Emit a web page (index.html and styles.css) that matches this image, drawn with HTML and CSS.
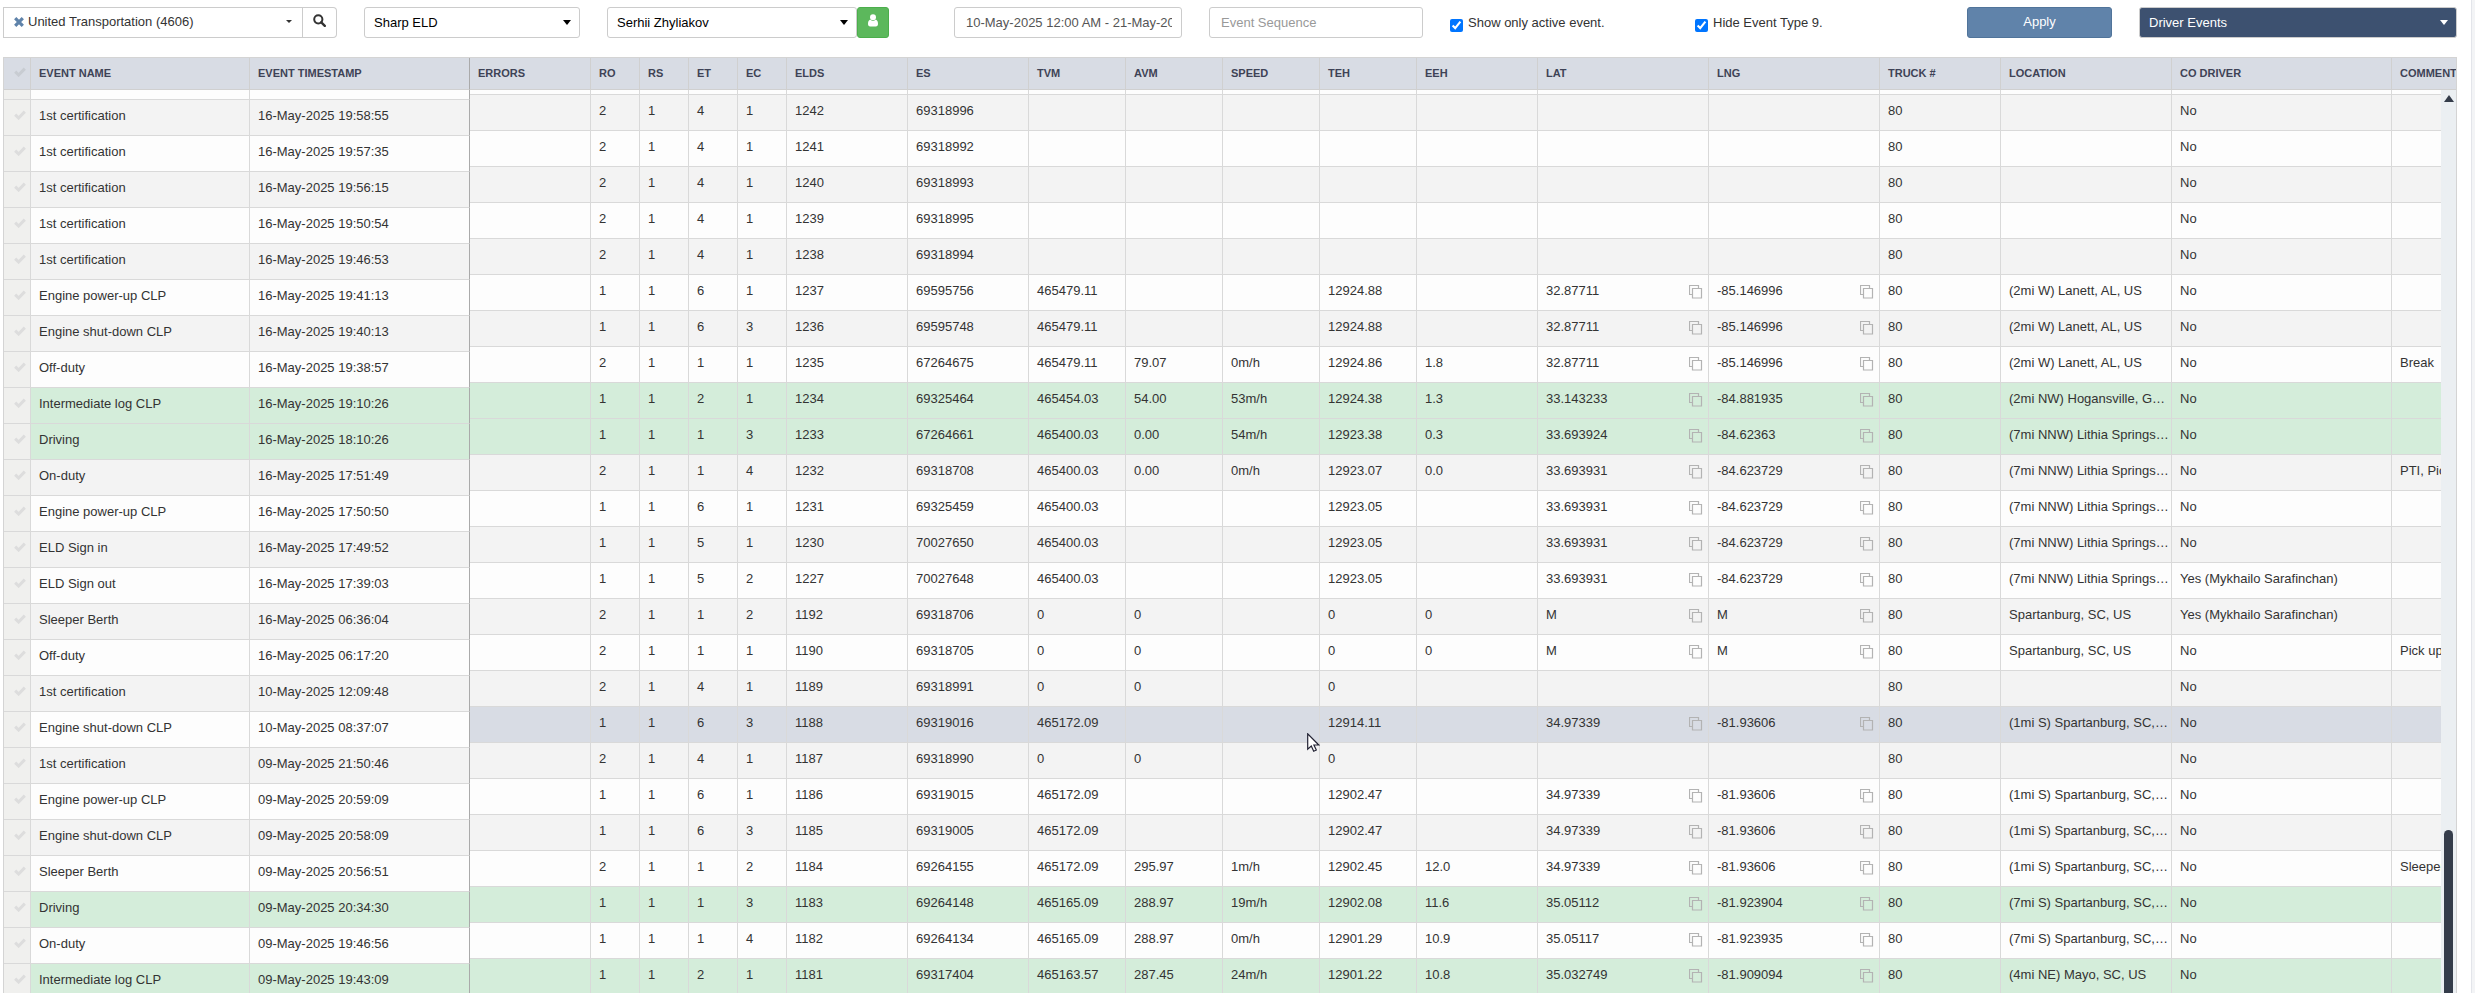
FILE: index.html
```html
<!DOCTYPE html>
<html lang="en">
<head>
    <meta charset="UTF-8">
    <meta name="viewport" content="width=device-width, initial-scale=1.0">
    <title>Driver Events</title>
    <link rel="stylesheet" href="styles.css">
</head>
<body>
    <svg class="sprite" aria-hidden="true">
        <symbol id="check" viewBox="0 0 12 10"><path d="M1.2 4.6 4.6 8 10.8 1.6" fill="none" stroke="currentColor" stroke-width="3"/></symbol>
        <symbol id="copy" viewBox="0 0 14 14"><path d="M3.5 9.5H.5V.5h9v3M3.5 3.5h9v9.500h-9z" fill="none" stroke="currentColor" stroke-width="1.2"/></symbol>
    </svg>

    <main class="panel">
        <form class="toolbar">
            <div class="company">
                <button type="button" class="company-select">
                    <svg class="icon-clear" viewBox="0 0 10 10"><path d="M1.200 1.200 8.800 8.800M8.800 1.200 1.200 8.800" stroke="currentColor" stroke-width="3.200"/></svg>
                    <span class="company-name">United Transportation (4606)</span>
                    <span class="caret-small"></span>
                </button>
                <button type="button" class="search" aria-label="Search">
                    <svg viewBox="0 0 13 13"><circle cx="5.300" cy="5.300" r="4.100" fill="none" stroke="currentColor" stroke-width="2"/><path d="M8.300 8.300 11.800 11.800" stroke="currentColor" stroke-width="2.400" stroke-linecap="round"/></svg>
                </button>
            </div>

            <div class="select-wrap">
                <select class="control" aria-label="Provider"><option>Sharp ELD</option></select>
            </div>

            <div class="driver">
                <div class="select-wrap">
                    <select class="control" aria-label="Driver"><option>Serhii Zhyliakov</option></select>
                </div>
                <button type="button" class="driver-button" aria-label="Driver profile">
                    <svg viewBox="0 0 10 13"><circle cx="5" cy="3.200" r="3" fill="currentColor"/><path d="M2.200 5.600C.8 6.200 0 7.800 0 9.800 0 11.600.8 12.500 2.200 12.500h5.600c1.400 0 2.200-.9 2.200-2.700 0-2-.8-3.600-2.200-4.200C7 6.500 6 6.900 5 6.900s-2-.4-2.800-1.300z" fill="currentColor"/></svg>
                </button>
            </div>

            <input class="control text" type="text" aria-label="Date range" value="10-May-2025 12:00 AM - 21-May-2025 11:59 PM">
            <input class="control text" type="text" aria-label="Event Sequence" placeholder="Event Sequence">

            <label class="check-label"><input type="checkbox" checked> Show only active event.</label>
            <label class="check-label"><input type="checkbox" checked> Hide Event Type 9.</label>

            <button type="button" class="apply">Apply</button>

            <div class="select-wrap dark">
                <select class="control" aria-label="Report"><option>Driver Events</option></select>
            </div>
        </form>

        <div class="grid">
            <table class="events pinned">
                <colgroup>
                    <col class="w-check"><col class="w-name"><col class="w-time">
                </colgroup>
                <thead>
                    <tr>
                        <th class="row-check"><svg class="icon-check"><use href="#check"/></svg></th>
                        <th>EVENT NAME</th>
                        <th>EVENT TIMESTAMP</th>
                    </tr>
                </thead>
                <tbody id="pinnedRows"></tbody>
            </table>

            <div class="scroll-pane">
                <table class="events details">
                    <colgroup>
                        <col class="w-wide"><col class="w-code"><col class="w-code"><col class="w-code"><col class="w-code">
                        <col class="w-wide"><col class="w-wide">
                        <col class="w-num"><col class="w-num"><col class="w-num"><col class="w-num">
                        <col class="w-wide"><col class="w-coord"><col class="w-coord"><col class="w-wide"><col class="w-coord">
                        <col class="w-time"><col class="w-time">
                    </colgroup>
                    <thead>
                        <tr>
                            <th>ERRORS</th><th>RO</th><th>RS</th><th>ET</th><th>EC</th><th>ELDS</th><th>ES</th>
                            <th>TVM</th><th>AVM</th><th>SPEED</th><th>TEH</th><th>EEH</th><th>LAT</th><th>LNG</th>
                            <th>TRUCK #</th><th>LOCATION</th><th>CO DRIVER</th><th>COMMENTS</th>
                        </tr>
                    </thead>
                    <tbody id="detailRows"></tbody>
                </table>
            </div>

            <div class="scrollbar">
                <span class="scroll-up"></span>
                <span class="scroll-thumb"></span>
            </div>
        </div>
    </main>

    <svg class="pointer" viewBox="0 0 13 19"><path d="M.7.8v15.400l3.600-3.200 2.400 5.200 2.600-1.200-2.400-5h4.900z" fill="#fff" stroke="#223" stroke-width="1.200"/></svg>

    <script src="script.js"></script>
</body>
</html>
```
FILE: styles.css
```css
* {
    box-sizing: border-box;
}

body {
    margin: 0;
    background: #f3f4f6;
    color: #333;
    font: 13px/20px "Liberation Sans", Arial, sans-serif;
}

.sprite {
    display: none;
}

.panel {
    display: flex;
    flex-direction: column;
    height: 100vh;
    margin-right: 3px;
    padding: 7px 14px 0 3px;
    border-right: 1px solid #e3e5ea;
    background: #fff;
    overflow: hidden;
}

/* Toolbar */
.toolbar {
    display: grid;
    grid-template-columns: 334fr 216fr 320fr 228fr 214fr 218fr 245fr 145fr 318fr;
    gap: 27px;
    margin-bottom: 19px;
}

button,
select,
input {
    font: inherit;
}

.control {
    display: block;
    width: 100%;
    min-width: 0;
    height: 31px;
    padding: 0 9px;
    border: 1px solid #ccc;
    border-radius: 3px;
    background: #fff;
    color: #000;
    appearance: none;
}

.text {
    padding: 0 9px 0 11px;
    color: #555;
}

.text::placeholder {
    color: #999;
}

.select-wrap {
    position: relative;
    flex: 1;
    min-width: 0;
}

.select-wrap::after {
    content: "";
    position: absolute;
    top: 13px;
    right: 9px;
    border: 4px solid transparent;
    border-top: 5px solid #000;
    border-bottom: 0;
    pointer-events: none;
}

.dark .control {
    background: #3d5170;
    color: #fff;
}

.dark::after {
    border-top-color: #fff;
}

.company,
.driver {
    display: flex;
}

.driver {
    padding-right: 38px;
}

.company-select {
    display: flex;
    flex: 1;
    align-items: center;
    padding: 0 10px 2px;
    border: 1px solid #ccc;
    background: #fff;
    color: #333;
    text-align: left;
}

.company-name {
    flex: 1;
    margin-left: 4px;
}

.icon-clear {
    width: 10px;
    height: 10px;
    color: #5f83aa;
}

.caret-small {
    border: 3px solid transparent;
    border-top-color: #333;
    border-bottom: 0;
}

.search {
    width: 34px;
    padding: 0;
    border: 1px solid #ccc;
    border-left: 0;
    border-radius: 0 4px 4px 0;
    background: #fff;
    color: #333;
}

.search svg {
    width: 13px;
    height: 13px;
}

.driver-button {
    width: 32px;
    padding: 0;
    border: 1px solid #4cae4c;
    border-radius: 3px;
    background: #5cb85c;
    color: #fff;
}

.driver-button svg {
    width: 10px;
    height: 13px;
}

.check-label {
    display: flex;
    align-items: center;
    gap: 5px;
    height: 32px;
    margin-bottom: -1px;
}

.check-label input {
    width: 13px;
    height: 13px;
    margin: 4px 0 0;
}

.apply {
    height: 31px;
    padding: 0 0 2px;
    border: 1px solid #50749a;
    border-radius: 3px;
    background: #6083aa;
    color: #fff;
}

/* Events grid */
.grid {
    position: relative;
    display: flex;
    flex: 1;
    min-height: 0;
    align-items: flex-start;
    border: 1px solid #d4d4d4;
    border-bottom: 0;
    overflow: hidden;
}

.scroll-pane {
    flex: 1;
    min-width: 0;
    overflow: hidden;
}

.events {
    table-layout: fixed;
    border-collapse: separate;
    border-spacing: 0;
}

.pinned {
    flex: none;
    width: 466px;
}

.details {
    width: 2110px;
}

.w-check { width: 27px; }
.w-name { width: 219px; }
.w-time { width: 220px; }
.w-code { width: 49px; }
.w-num { width: 97px; }
.w-wide { width: 121px; }
.w-coord { width: 171px; }

th,
td {
    padding: 0 2px 0 8px;
    border-right: 1px solid #d9d9d9;
    border-bottom: 1px solid #d9d9d9;
    text-align: left;
    vertical-align: top;
    white-space: nowrap;
    overflow: hidden;
    text-overflow: ellipsis;
}

th {
    height: 32px;
    border-color: #d0d0d0;
    background: #d8dce4;
    color: #3e4356;
    font-size: 11px;
    line-height: 31px;
    text-overflow: clip;
}

td {
    height: 36px;
    padding-top: 6px;
    background: #fdfdfd;
}

.odd td {
    background: #f3f3f3;
}

.driving td {
    background: #d4edda;
}

.hover td {
    background: #d8dce4;
}

.pinned th:last-child,
.pinned td:last-child {
    border-right-color: #aaa;
}

.events .row-check {
    padding-left: 10px;
    color: #ddd;
}

.events th.row-check {
    color: #c8ccd2;
}

.pinned td.row-check {
    background: #f0f0ee;
}

.icon-check {
    width: 12px;
    height: 10px;
}

/* Row scrolled halfway under the header */
.events .partial td {
    height: 10px;
    padding: 0;
}

.details .partial td {
    height: 5px;
}

.copy {
    float: right;
    display: block;
    width: 14px;
    height: 14px;
    margin: 4px 3px 0 0;
    padding: 0;
    border: 0;
    background: none;
    color: #b3b3b3;
}

.copy svg {
    display: block;
    width: 14px;
    height: 14px;
}

.scrollbar {
    position: absolute;
    top: 32px;
    right: 0;
    bottom: 0;
    width: 15px;
    background: #ebeff2;
}

.scroll-up {
    position: absolute;
    top: 5px;
    left: 3px;
    border: 5px solid transparent;
    border-top: 0;
    border-bottom: 7px solid #343c4a;
}

.scroll-thumb {
    position: absolute;
    top: 82%;
    bottom: 0;
    left: 3px;
    width: 9px;
    border-radius: 5px 5px 0 0;
    background: #343c4a;
}

.pointer {
    position: absolute;
    top: 733px;
    left: 1307px;
    width: 13px;
    height: 19px;
}
```
FILE: script.js
```js
// name | timestamp | RO | RS | ET | EC | ELDS | ES | TVM | AVM | SPEED | TEH | EEH | LAT | LNG | TRUCK | LOCATION | CO DRIVER | COMMENTS
const events = `
1st certification|16-May-2025 19:58:55|2|1|4|1|1242|69318996||||||||80||No|
1st certification|16-May-2025 19:57:35|2|1|4|1|1241|69318992||||||||80||No|
1st certification|16-May-2025 19:56:15|2|1|4|1|1240|69318993||||||||80||No|
1st certification|16-May-2025 19:50:54|2|1|4|1|1239|69318995||||||||80||No|
1st certification|16-May-2025 19:46:53|2|1|4|1|1238|69318994||||||||80||No|
Engine power-up CLP|16-May-2025 19:41:13|1|1|6|1|1237|69595756|465479.11|||12924.88||32.87711|-85.146996|80|(2mi W) Lanett, AL, US|No|
Engine shut-down CLP|16-May-2025 19:40:13|1|1|6|3|1236|69595748|465479.11|||12924.88||32.87711|-85.146996|80|(2mi W) Lanett, AL, US|No|
Off-duty|16-May-2025 19:38:57|2|1|1|1|1235|67264675|465479.11|79.07|0m/h|12924.86|1.8|32.87711|-85.146996|80|(2mi W) Lanett, AL, US|No|Break
Intermediate log CLP|16-May-2025 19:10:26|1|1|2|1|1234|69325464|465454.03|54.00|53m/h|12924.38|1.3|33.143233|-84.881935|80|(2mi NW) Hogansville, GA, US|No|
Driving|16-May-2025 18:10:26|1|1|1|3|1233|67264661|465400.03|0.00|54m/h|12923.38|0.3|33.693924|-84.62363|80|(7mi NNW) Lithia Springs, GA, US|No|
On-duty|16-May-2025 17:51:49|2|1|1|4|1232|69318708|465400.03|0.00|0m/h|12923.07|0.0|33.693931|-84.623729|80|(7mi NNW) Lithia Springs, GA, US|No|PTI, Pick up
Engine power-up CLP|16-May-2025 17:50:50|1|1|6|1|1231|69325459|465400.03|||12923.05||33.693931|-84.623729|80|(7mi NNW) Lithia Springs, GA, US|No|
ELD Sign in|16-May-2025 17:49:52|1|1|5|1|1230|70027650|465400.03|||12923.05||33.693931|-84.623729|80|(7mi NNW) Lithia Springs, GA, US|No|
ELD Sign out|16-May-2025 17:39:03|1|1|5|2|1227|70027648|465400.03|||12923.05||33.693931|-84.623729|80|(7mi NNW) Lithia Springs, GA, US|Yes (Mykhailo Sarafinchan)|
Sleeper Berth|16-May-2025 06:36:04|2|1|1|2|1192|69318706|0|0||0|0|M|M|80|Spartanburg, SC, US|Yes (Mykhailo Sarafinchan)|
Off-duty|16-May-2025 06:17:20|2|1|1|1|1190|69318705|0|0||0|0|M|M|80|Spartanburg, SC, US|No|Pick up
1st certification|10-May-2025 12:09:48|2|1|4|1|1189|69318991|0|0||0||||80||No|
Engine shut-down CLP|10-May-2025 08:37:07|1|1|6|3|1188|69319016|465172.09|||12914.11||34.97339|-81.93606|80|(1mi S) Spartanburg, SC, US|No|
1st certification|09-May-2025 21:50:46|2|1|4|1|1187|69318990|0|0||0||||80||No|
Engine power-up CLP|09-May-2025 20:59:09|1|1|6|1|1186|69319015|465172.09|||12902.47||34.97339|-81.93606|80|(1mi S) Spartanburg, SC, US|No|
Engine shut-down CLP|09-May-2025 20:58:09|1|1|6|3|1185|69319005|465172.09|||12902.47||34.97339|-81.93606|80|(1mi S) Spartanburg, SC, US|No|
Sleeper Berth|09-May-2025 20:56:51|2|1|1|2|1184|69264155|465172.09|295.97|1m/h|12902.45|12.0|34.97339|-81.93606|80|(1mi S) Spartanburg, SC, US|No|Sleeper Berth
Driving|09-May-2025 20:34:30|1|1|1|3|1183|69264148|465165.09|288.97|19m/h|12902.08|11.6|35.05112|-81.923904|80|(7mi S) Spartanburg, SC, US|No|
On-duty|09-May-2025 19:46:56|1|1|1|4|1182|69264134|465165.09|288.97|0m/h|12901.29|10.9|35.05117|-81.923935|80|(7mi S) Spartanburg, SC, US|No|
Intermediate log CLP|09-May-2025 19:43:09|1|1|2|1|1181|69317404|465163.57|287.45|24m/h|12901.22|10.8|35.032749|-81.909094|80|(4mi NE) Mayo, SC, US|No|
`.trim().split('\n').map(line => line.split('|'));

const checkCell = '<td class="row-check"><svg class="icon-check"><use href="#check"/></svg></td>';
const copyButton = '<button type="button" class="copy" aria-label="Copy"><svg><use href="#copy"/></svg></button>';
const hovered = '1188';

let pinned = '<tr class="partial"><td class="row-check"></td><td></td><td></td></tr>';
let details = '<tr class="partial">' + '<td></td>'.repeat(18) + '</tr>';

events.forEach((event, i) => {
    const [name, time, ...rest] = event;
    let rowClass = i % 2 === 0 ? 'odd' : '';
    if (name === 'Driving' || name.startsWith('Intermediate')) {
        rowClass = 'driving';
    }
    pinned += `<tr class="${rowClass}">${checkCell}<td>${name}</td><td>${time}</td></tr>`;

    if (rest[4] === hovered) {
        rowClass = 'hover';
    }
    const cells = rest.map((value, col) => {
        const isCoord = (col === 11 || col === 12) && value;
        return `<td>${isCoord ? copyButton : ''}${value}</td>`;
    });
    details += `<tr class="${rowClass}"><td></td>${cells.join('')}</tr>`;
});

document.getElementById('pinnedRows').innerHTML = pinned;
document.getElementById('detailRows').innerHTML = details;
```
